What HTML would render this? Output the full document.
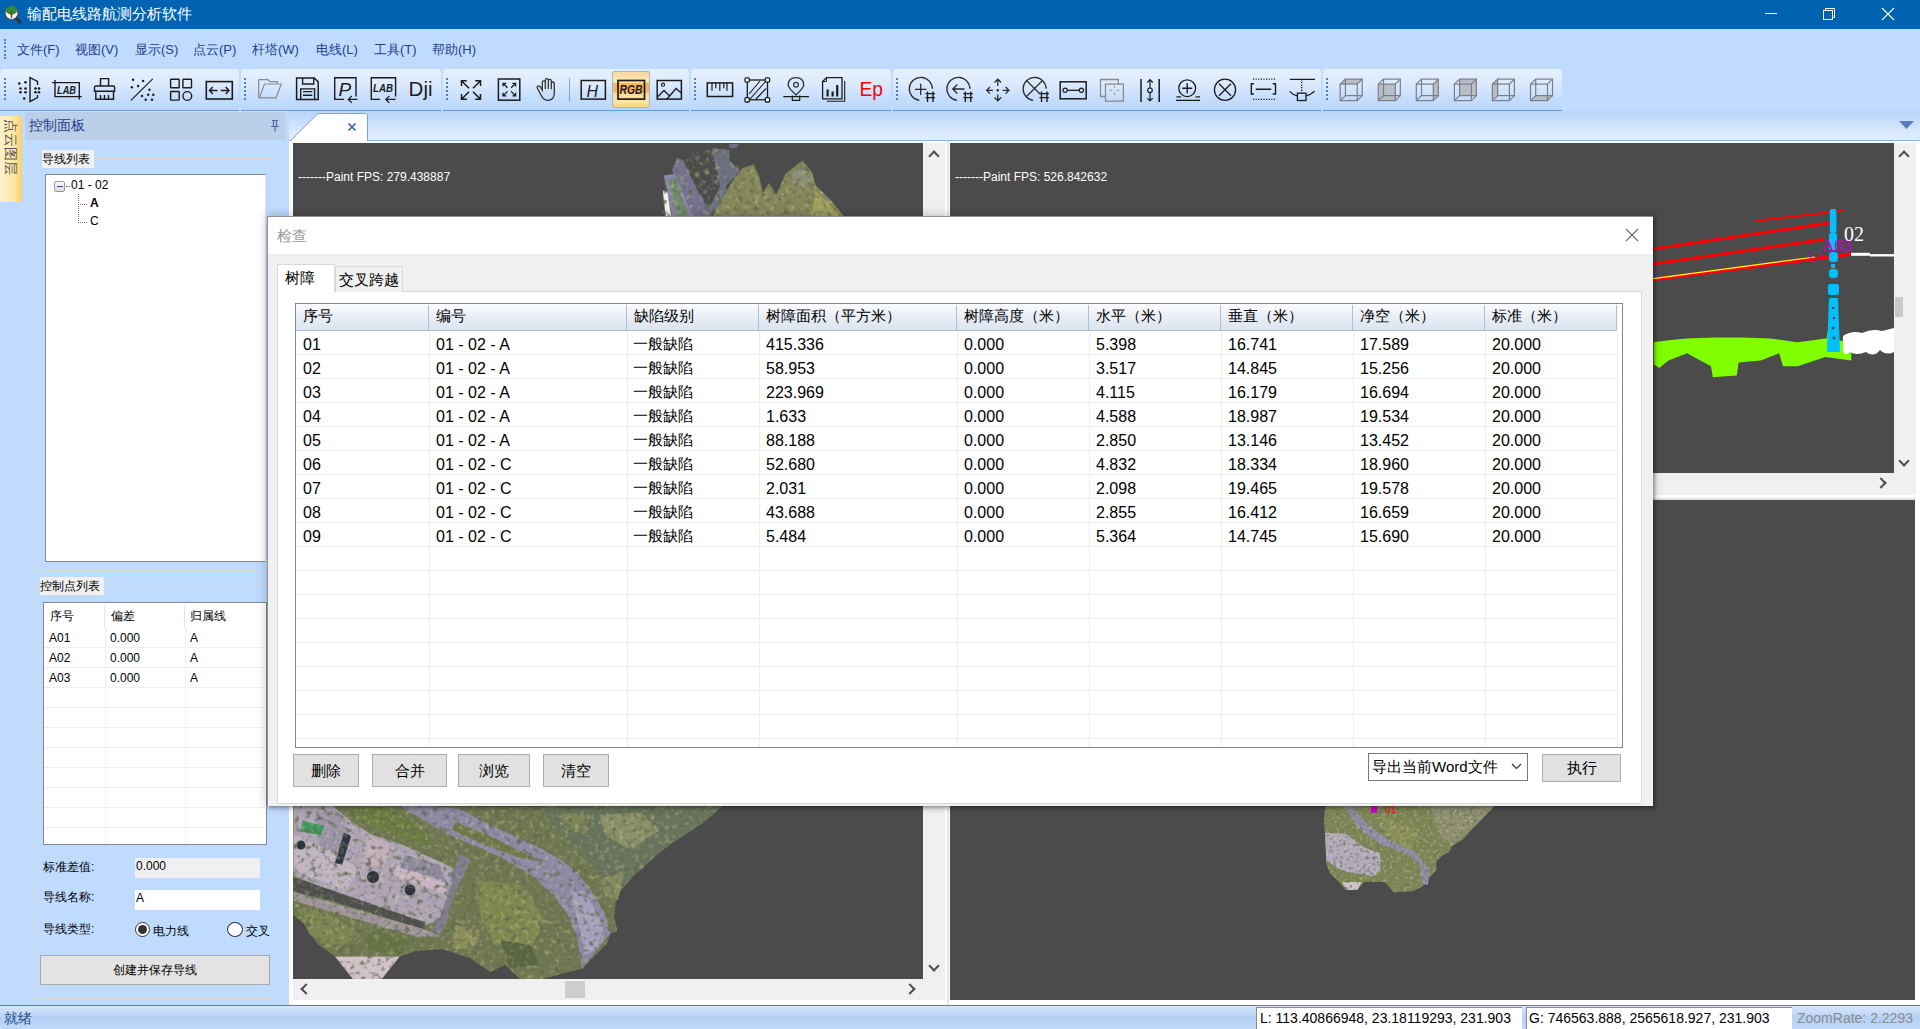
<!DOCTYPE html>
<html><head><meta charset="utf-8">
<style>
*{box-sizing:border-box;margin:0;padding:0}
html,body{width:1920px;height:1029px;overflow:hidden;background:#bfdbff;font-family:"Liberation Sans",sans-serif;color:#000}
.a{position:absolute}
.nw{white-space:nowrap}
.grip{position:absolute;width:2px;border-left:2px dotted #4a7fd6}
.tbseg{position:absolute;top:69px;height:42px;border-radius:4px 4px 0 0;background:linear-gradient(#e6f0fe 0%,#dceafd 35%,#c6defd 70%,#b9d7fd 100%);border-bottom:1px solid #6a9ad6}
.ico{position:absolute;top:77px;width:26px;height:26px}
.menu{position:absolute;top:12px;font-size:13px;line-height:15px;color:#243f8e;white-space:nowrap}
.dark{position:absolute;background:#4b4b4b}
.sb{position:absolute;background:#f0f0f0}
.chev{position:absolute;width:8px;height:8px;border-left:2px solid #505050;border-top:2px solid #505050}
.btn{position:absolute;background:#e1e1e1;border:1px solid #adadad;font-size:15px;line-height:31px;text-align:center}
.row{position:absolute;left:0;height:24px;width:1326px;border-bottom:1px solid #f0f0f0}
.c{position:absolute;top:0;height:24px;font-size:16px;line-height:24px;white-space:nowrap}
.z{font-size:15px}
.vl{position:absolute;width:1px;background:#f0f0f0}
</style></head><body>
<!-- title bar -->
<div class="a" style="left:0;top:0;width:1920px;height:29px;background:#0063b1"></div>
<div class="a nw" style="left:27px;top:5px;font-size:15px;line-height:18px;color:#fff">输配电线路航测分析软件</div>
<svg class="a" style="left:1758px;top:4px" width="160" height="22" viewBox="0 0 160 22">
 <line x1="7" y1="9.5" x2="19" y2="9.5" stroke="#fff" stroke-width="1"/>
 <rect x="65.5" y="6.5" width="9" height="9" fill="none" stroke="#fff"/>
 <path d="M67.5 6.5V4.5H76.5V13.5H74.5" fill="none" stroke="#fff"/>
 <path d="M124 4L136 16M136 4L124 16" stroke="#fff" stroke-width="1.1"/>
</svg>
<!-- app icon -->
<svg class="a" style="left:3px;top:3px" width="20" height="22" viewBox="0 0 20 22">
 <circle cx="8.5" cy="10" r="6.5" fill="#fff" stroke="#555" stroke-width="1.2"/>
 <path d="M3 9 Q3 3 8.5 3 Q14 3 14 9 Q11 12 8.5 12 Q6 12 3 9Z" fill="#2e8b3a"/>
 <path d="M8.5 8V15" stroke="#8b3a1a" stroke-width="1.5"/>
 <path d="M13 15L18 20" stroke="#333" stroke-width="3"/>
</svg>
<!-- menubar -->
<div class="grip" style="left:4px;top:39px;height:20px"></div>
<div class="menu" style="left:17px;top:42px">文件(F)</div>
<div class="menu" style="left:75px;top:42px">视图(V)</div>
<div class="menu" style="left:135px;top:42px">显示(S)</div>
<div class="menu" style="left:193px;top:42px">点云(P)</div>
<div class="menu" style="left:252px;top:42px">杆塔(W)</div>
<div class="menu" style="left:316px;top:42px">电线(L)</div>
<div class="menu" style="left:374px;top:42px">工具(T)</div>
<div class="menu" style="left:432px;top:42px">帮助(H)</div>
<!-- toolbar segments -->
<div class="a" style="left:0;top:111px;width:1920px;height:1px;background:#d8e2ee"></div>
<div class="tbseg" style="left:0;width:239px"></div>
<div class="tbseg" style="left:241px;width:200px"></div>
<div class="tbseg" style="left:443px;width:246px"></div>
<div class="tbseg" style="left:691px;width:200px"></div>
<div class="tbseg" style="left:893px;width:428px"></div>
<div class="tbseg" style="left:1323px;width:239px"></div>
<div class="grip" style="left:4px;top:78px;height:22px"></div>
<div class="grip" style="left:244px;top:78px;height:22px"></div>
<div class="grip" style="left:446px;top:78px;height:22px"></div>
<div class="grip" style="left:694px;top:78px;height:22px"></div>
<div class="grip" style="left:896px;top:78px;height:22px"></div>
<div class="grip" style="left:1326px;top:78px;height:22px"></div>
<div class="a" style="left:569px;top:78px;width:1px;height:24px;background:#7fa6dc"></div>
<div class="a" style="left:612px;top:71px;width:38px;height:37px;border:1px solid #9ab8e0;border-radius:2px;background:linear-gradient(#f9d8a8 0%,#fbdba8 13%,#fde8a8 16%,#fde4a0 30%,#f9b45a 33%,#f9b45a 57%,#fddb92 60%,#fee6a2 87%,#fdd984 91%,#fdd984 100%)"></div>
<svg class="a" style="left:0;top:0" width="1600" height="110" viewBox="0 0 1600 110">
<g fill="none" stroke="#1c1c1c" stroke-width="1.4" stroke-linecap="butt" stroke-linejoin="miter">
<!-- 1: point projection -->
<g fill="#1c1c1c" stroke="none">
<circle cx="19.3" cy="83.5" r="1.3"/><circle cx="25.5" cy="82.3" r="1.3"/>
<circle cx="20.5" cy="88.5" r="1.3"/><circle cx="25.5" cy="88.5" r="1.3"/>
<circle cx="20.5" cy="92.2" r="1.3"/><circle cx="25.5" cy="92.2" r="1.3"/>
<circle cx="24.2" cy="98.5" r="1.3"/>
<circle cx="35.5" cy="88.5" r="1.3"/><circle cx="39" cy="88.5" r="1.3"/>
<circle cx="35.5" cy="92.2" r="1.3"/><circle cx="39" cy="92.2" r="1.3"/>
</g>
<path d="M37.5 85V81.5L30 77.7V101.5L37.5 97.5V95"/>
<!-- 2: LAB -->
<path d="M52 82.6H79.3V99.5M55 80V96.6H81.7"/>
<text x="57" y="93.5" font-family="Liberation Sans" font-style="italic" font-weight="bold" font-size="11" fill="#1c1c1c" stroke="none" textLength="19" lengthAdjust="spacingAndGlyphs">LAB</text>
<!-- 3: brush -->
<path d="M100.5 86V78.6H108.6V86M94.5 91.2V87.5Q94.5 86 96 86H113Q114.6 86 114.6 87.5V91.2ZM95.8 91.2V99.3H113.5V91.2M100.5 95V99M104.5 95V99M108.5 95V99"/>
<!-- 4: slash dots -->
<path d="M130.9 100.4L152.7 78.9" stroke-width="1.2"/>
<g fill="#1c1c1c" stroke="none">
<circle cx="133.1" cy="79.7" r="1.2"/><circle cx="143.1" cy="81" r="1.2"/><circle cx="131.9" cy="87.3" r="1.2"/><circle cx="138.1" cy="86" r="1.2"/>
<circle cx="149.5" cy="89.7" r="1.2"/><circle cx="142" cy="96" r="1.2"/><circle cx="148.2" cy="94.7" r="1.2"/><circle cx="153.3" cy="94.7" r="1.2"/>
<circle cx="145.7" cy="99.7" r="1.2"/><circle cx="152" cy="99.7" r="1.2"/>
</g>
<!-- 5: grid -->
<rect x="170.6" y="79.2" width="8.6" height="8.6" rx="0.6"/><rect x="182.9" y="79.2" width="8.6" height="8.6" rx="0.6"/>
<rect x="170.6" y="91.5" width="8.6" height="8.6" rx="0.6"/><circle cx="187.3" cy="96" r="4.4"/>
<!-- 6: rect arrows -->
<rect x="206.3" y="81.6" width="26" height="17.4" stroke-width="1.6"/>
<path d="M209.5 90.5H217.5M212.8 87L209.5 90.5L212.8 94M220.8 90.5H229M225.7 87L229 90.5L225.7 94"/>
<!-- seg2: folder -->
<g stroke="#8a8a8a" stroke-width="1.2" stroke-linejoin="round">
<path d="M258.7 97.8V79.7H267.9L270 81.7H277.3V84"/>
<path d="M258.7 97.8H276L281.3 84H264.5L259.5 97.8"/>
</g>
<!-- save -->
<path d="M296.6 77.9H314.2L318.2 81.9V99.4H296.6Z" stroke-width="1.5"/>
<path d="M302.6 77.9V84H313.7V77.9M300.7 99.4V88.9H314.6V99.4M303 91.6H312.3M303 95.3H312.3"/>
<!-- P box -->
<path d="M344 99.4H334.7V77.8H356V96.6"/>
<path d="M357.5 99.4H348.5M351.8 96L348.3 99.4L351.8 102.8" stroke-width="1.2"/>
<text x="338.5" y="95.8" font-family="Liberation Sans" font-style="italic" font-size="19" fill="#1c1c1c" stroke="none">P</text>
<!-- LAB box -->
<path d="M380 99.4H371.3V77.8H395.6V96.6"/>
<path d="M395.6 99.4H386M389.3 96L385.8 99.4L389.3 102.8" stroke-width="1.2"/>
<text x="373" y="92.3" font-family="Liberation Sans" font-style="italic" font-weight="bold" font-size="10.5" fill="#1c1c1c" stroke="none" textLength="20" lengthAdjust="spacingAndGlyphs">LAB</text>
<!-- Dji -->
<text x="408.6" y="95.8" font-family="Liberation Sans" font-size="20" fill="#1c1c1c" stroke="none" textLength="24" lengthAdjust="spacingAndGlyphs">Dji</text>
<!-- seg3: expand -->
<path d="M461.5 86V80.7H466.8M461.5 80.7L469 88.2M480.5 86V80.7H475.2M480.5 80.7L473 88.2M461.5 94V99.3H466.8M461.5 99.3L469 91.8M480.5 94V99.3H475.2M480.5 99.3L473 91.8" stroke-width="1.5"/>
<!-- expand box -->
<rect x="498.4" y="79" width="21.4" height="21.2" stroke-width="1.5"/>
<path d="M503 86.5V83.3H506.2M503 83.3L507.5 87.8M515.6 86.5V83.3H512.4M515.6 83.3L511.1 87.8M503 92.7V95.9H506.2M503 95.9L507.5 91.4M515.6 92.7V95.9H512.4M515.6 95.9L511.1 91.4" stroke-width="1.3"/>
<!-- hand -->
<path d="M541 95L537.5 88.5Q536.5 86.5 538.3 86Q539.6 85.6 540.6 87.4L542.3 90.2V82.5Q542.3 80.8 543.8 80.8Q545.3 80.8 545.3 82.5V89V80.3Q545.3 78.7 546.8 78.7Q548.3 78.7 548.3 80.3V89V81Q548.3 79.4 549.8 79.4Q551.3 79.4 551.3 81V89.3V83.5Q551.3 82 552.8 82Q554.3 82 554.3 83.5V93Q554.3 100.3 547.5 100.3Q543.5 100.3 541 95Z" stroke-width="1.3" stroke="#333"/>
<!-- H -->
<rect x="581.2" y="80.5" width="24.2" height="18.6" stroke-width="1.5"/>
<text x="586.5" y="96.5" font-family="Liberation Sans" font-style="italic" font-size="16" fill="#1c1c1c" stroke="none">H</text>
<!-- RGB -->
<rect x="618" y="80.5" width="26.5" height="18.6" stroke-width="1.7"/>
<text x="619.5" y="94.3" font-family="Liberation Sans" font-style="italic" font-weight="bold" font-size="12" fill="#1c1c1c" stroke="none" textLength="23" lengthAdjust="spacingAndGlyphs">RGB</text>
<!-- image -->
<rect x="657.2" y="80.5" width="24.2" height="18.6" stroke-width="1.5"/>
<circle cx="663" cy="84.7" r="1.6" stroke-width="1.1"/>
<path d="M657.5 97L664 90.5L670 96.3M667 99L676 88.5L681.3 93" stroke-width="1.3"/>
<!-- seg4: ruler -->
<rect x="707.3" y="82.9" width="25.3" height="13.6" stroke-width="1.5"/>
<path d="M712 83V90.8M715.8 83V88.3M719.8 83V90.8M723.8 83V88.3M727 83V90.8" stroke-width="1.2"/>
<!-- hatched rect -->
<rect x="747.3" y="80" width="20.2" height="19.8" stroke-width="1.3"/>
<path d="M749 94L760 81M750 99L766 81M756 99L766 88.5" stroke-width="1.1"/>
<g fill="#fff" stroke-width="1.3"><rect x="745" y="77.8" width="4.3" height="4.3" rx="1"/><rect x="765.3" y="77.8" width="4.3" height="4.3" rx="1"/><rect x="745" y="97.7" width="4.3" height="4.3" rx="1"/><rect x="765.3" y="97.7" width="4.3" height="4.3" rx="1"/></g>
<!-- pin -->
<path d="M796 95Q788.2 87.5 788.2 85.2Q788.2 77.6 796 77.6Q803.7 77.6 803.7 85.2Q803.7 87.5 796 95Z" stroke="#333" stroke-width="1.3"/>
<circle cx="796" cy="84.8" r="2.4" stroke="#333" stroke-width="1.2"/>
<path d="M783.3 96.6H809M792.3 95.5V100.4H799.7V95.5" stroke-width="1.2"/>
<!-- chart doc -->
<path d="M822.6 81.5L826.5 77.6H842V98.8H822.6Z" stroke-width="1.3"/>
<path d="M822.6 81.5H826.5V77.6" stroke-width="1"/>
<path d="M844.7 81V101.3H826.8" stroke-width="1.1"/>
<path d="M827.6 96.5V89.6M832.6 96.5V91.5M837.2 96.5V85" stroke-width="2.2"/>
<text x="859.5" y="96.3" font-family="Liberation Sans" font-size="21" fill="#ff0000" stroke="none" textLength="23.5" lengthAdjust="spacingAndGlyphs">Ep</text>
<!-- seg5 -->
<g stroke="#2a2a2a" stroke-width="1.3">
<path d="M919.3 100.3A11.5 11.5 0 1 1 932.3 88.8"/>
<path d="M915 89.3H926.5M920.7 83.7V95"/>
<path d="M956.9 100.3A11.5 11.5 0 1 1 969.9 88.8"/>
<path d="M953 89H964.5M957.3 84.5L952.8 89L957.3 93.5"/>
<path d="M997.8 80V86M994.5 82.5L997.8 79.2L1001.1 82.5M997.8 94.5V100.8M994.5 97.5L997.8 100.8L1001.1 97.5M987.2 90.3H993M990 87L986.7 90.3L990 93.6M1002.7 90.3H1008.7M1005.6 87L1008.9 90.3L1005.6 93.6"/>
<circle cx="997.8" cy="90.3" r="1.2" fill="#2a2a2a" stroke="none"/>
<path d="M1033.1 100.3A11.5 11.5 0 1 1 1046.1 88.8"/>
<path d="M1026.5 80.5L1040 94M1042.5 80.5L1026.5 96.5" stroke-width="1.2"/>
</g>
<g stroke="#1c1c1c" stroke-width="1.4">
<path d="M925.5 93.6H935M925.5 97.6H935M927.5 91.5V102M933 91.5V102"/>
<path d="M963.3 93.6H972.8M963.3 97.6H972.8M965.3 91.5V102M970.8 91.5V102"/>
<path d="M1039.5 93.6H1049M1039.5 97.6H1049M1041.5 91.5V102M1047 91.5V102"/>
</g>
<rect x="1060.2" y="81.8" width="26" height="17" stroke-width="1.5"/>
<path d="M1067.3 90.3H1079.2" stroke-width="1.3"/>
<circle cx="1065.1" cy="90.3" r="2.1" stroke-width="1.2"/><circle cx="1081.4" cy="90.3" r="2.1" stroke-width="1.2"/>
<!-- layered squares -->
<g stroke="#8c8c8c" stroke-width="1.3"><path d="M1105.5 96.5H1100.5V79.5H1118.3V84"/><rect x="1105.5" y="84.1" width="17.9" height="17.1"/>
<path d="M1114.5 85.8V87.8M1114.5 92.8V94.8M1109.8 90.3H1111.8M1117.2 90.3H1119.2" stroke-width="1"/></g>
<path d="M1141 79V102M1159.2 79V102" stroke-width="1.5"/>
<circle cx="1150" cy="90.3" r="2.3" stroke-width="1.2"/>
<path d="M1150 88V80M1147.3 82.5L1150 79.7L1152.7 82.5M1150 92.6V101M1147.3 98.2L1150 101L1152.7 98.2" stroke-width="1.2"/>
<circle cx="1187.2" cy="88.2" r="8.4" stroke-width="1.3"/>
<path d="M1182.2 88.2H1192.2M1187.2 83.2V93.2" stroke-width="1.4"/>
<path d="M1176 100.4H1200M1176.5 96.9H1181M1195.5 96.9H1200" stroke-width="1.3"/>
<circle cx="1225" cy="89.7" r="10.6" stroke-width="1.3"/>
<path d="M1219 83.7L1231 95.7M1231 83.7L1219 95.7" stroke-width="1.3"/>
<path d="M1253 79.2H1275M1253 99.3H1275" stroke-dasharray="1.2 1.4" stroke-width="1.2"/>
<path d="M1254 83.7H1251.3V94H1254M1272.7 83.7H1275.5V94H1272.7M1255.8 89.3H1271.2" stroke-width="1.4"/>
<path d="M1289.8 79.3H1315M1301.6 80V93" stroke-width="1.3"/>
<path d="M1301.6 80.5V93" stroke="#fff" stroke-width="1.4" stroke-dasharray="1.3 1.3"/>
<rect x="1297.4" y="93.2" width="8.6" height="7.3" stroke-width="1.3"/>
<path d="M1289.5 91.3Q1293 95 1297.4 95.8M1306 95.8Q1310.5 95 1314.5 91.3" stroke-width="1.2"/>
</g>
<!-- cubes -->
<g stroke="#7a7e86" stroke-width="1.2" fill="none">
<path d="M1340.2 84.1L1345.4 79.1H1362.2L1357.2 84.1Z" fill="#b9bec7" stroke="none"/><rect x="1340.2" y="84.1" width="17" height="16.5"/><rect x="1345.4" y="79.1" width="16.8" height="16.5"/><path d="M1340.2 84.1L1345.4 79.1M1357.2 84.1L1362.2 79.1M1340.2 100.6L1345.4 95.6M1357.2 100.6L1362.2 95.6"/>
<rect x="1378.3" y="84.1" width="17" height="16.5" fill="#b9bec7" stroke="none"/><rect x="1378.3" y="84.1" width="17" height="16.5"/><rect x="1383.5" y="79.1" width="16.8" height="16.5"/><path d="M1378.3 84.1L1383.5 79.1M1395.3 84.1L1400.3 79.1M1378.3 100.6L1383.5 95.6M1395.3 100.6L1400.3 95.6"/>
<path d="M1433.3 84.1L1438.3 79.1V95.6L1433.3 100.6Z" fill="#b9bec7" stroke="none"/><rect x="1416.3" y="84.1" width="17" height="16.5"/><rect x="1421.5" y="79.1" width="16.8" height="16.5"/><path d="M1416.3 84.1L1421.5 79.1M1433.3 84.1L1438.3 79.1M1416.3 100.6L1421.5 95.6M1433.3 100.6L1438.3 95.6"/>
<rect x="1459.6000000000001" y="79.1" width="16.8" height="16.5" fill="#b9bec7" stroke="none"/><rect x="1454.4" y="84.1" width="17" height="16.5"/><rect x="1459.6000000000001" y="79.1" width="16.8" height="16.5"/><path d="M1454.4 84.1L1459.6000000000001 79.1M1471.4 84.1L1476.4 79.1M1454.4 100.6L1459.6000000000001 95.6M1471.4 100.6L1476.4 95.6"/>
<path d="M1492.4 84.1L1497.6000000000001 79.1V95.6L1492.4 100.6Z" fill="#b9bec7" stroke="none"/><rect x="1492.4" y="84.1" width="17" height="16.5"/><rect x="1497.6000000000001" y="79.1" width="16.8" height="16.5"/><path d="M1492.4 84.1L1497.6000000000001 79.1M1509.4 84.1L1514.4 79.1M1492.4 100.6L1497.6000000000001 95.6M1509.4 100.6L1514.4 95.6"/>
<path d="M1530.5 100.6L1535.7 95.6H1552.5L1547.5 100.6Z" fill="#b9bec7" stroke="none"/><rect x="1530.5" y="84.1" width="17" height="16.5"/><rect x="1535.7" y="79.1" width="16.8" height="16.5"/><path d="M1530.5 84.1L1535.7 79.1M1547.5 84.1L1552.5 79.1M1530.5 100.6L1535.7 95.6M1547.5 100.6L1552.5 95.6"/>
</g>
</svg>
<!-- left panel -->
<div class="a" style="left:0;top:116px;width:22px;height:86px;background:linear-gradient(90deg,#fff2cc,#ffe9a8 60%,#fbd066)"></div>
<div class="a nw" style="left:-17px;top:139px;width:56px;height:16px;font-size:14px;line-height:16px;color:#555;transform:rotate(90deg);transform-origin:28px 8px">点云图层</div>
<div class="a" style="left:25px;top:112px;width:260px;height:28px;background:#bccfe8"></div>
<div class="a nw" style="left:29px;top:117px;font-size:14px;line-height:16px;color:#1f3f8a">控制面板</div>
<svg class="a" style="left:269px;top:119px" width="12" height="14" viewBox="0 0 12 14"><path d="M3 1.5H9M4.5 1.5V7.5M7.5 1.5V7.5M2 7.5H10M6 7.5V12.5" stroke="#4a68b0" stroke-width="1.2" fill="none"/></svg>
<!-- group 1 -->
<div class="a" style="left:35px;top:158px;width:241px;height:413px;border:1px solid #d8d8d8"></div>
<div class="a nw" style="left:42px;top:150px;width:52px;height:18px;background:#f0f0f0;font-size:12px;line-height:18px">导线列表</div>
<div class="a" style="left:45px;top:174px;width:221px;height:388px;background:#fff;border:1px solid #828790;border-right-color:#e0e0e0;border-bottom-color:#8a8a8a"></div>
<div class="a" style="left:54px;top:181px;width:11px;height:11px;border:1px solid #9a9a9a;border-radius:2px;background:linear-gradient(#f8f8f8,#dcdcdc)"></div>
<div class="a" style="left:57px;top:186px;width:6px;height:1px;background:#4040a0"></div>
<div class="a" style="left:66px;top:186px;width:4px;border-top:1px dotted #777"></div>
<div class="a nw" style="left:71px;top:178px;font-size:12px;line-height:14px">01 - 02</div>
<div class="a" style="left:78px;top:194px;height:29px;border-left:1px dotted #777"></div>
<div class="a" style="left:78px;top:204px;width:9px;border-top:1px dotted #777"></div>
<div class="a" style="left:78px;top:222px;width:9px;border-top:1px dotted #777"></div>
<div class="a nw" style="left:90px;top:196px;font-size:12px;line-height:14px;font-weight:bold">A</div>
<div class="a nw" style="left:90px;top:214px;font-size:12px;line-height:14px">C</div>
<!-- group 2 -->
<div class="a" style="left:33px;top:585px;width:244px;height:414px;border:1px solid #d8d8d8"></div>
<div class="a nw" style="left:40px;top:577px;width:64px;height:18px;background:#f0f0f0;font-size:12px;line-height:18px">控制点列表</div>
<div class="a" style="left:43px;top:602px;width:224px;height:243px;background:#fff;border:1px solid #828790"></div>
<div class="a" style="left:104px;top:606px;width:1px;height:21px;background:#e5e5e5"></div>
<div class="a" style="left:184px;top:606px;width:1px;height:21px;background:#e5e5e5"></div>
<div class="a" style="left:105px;top:627px;width:1px;height:217px;background:#efefef"></div>
<div class="a" style="left:185px;top:627px;width:1px;height:217px;background:#efefef"></div>
<div class="a" style="left:44px;top:647px;width:221px;height:1px;background:#efefef"></div>
<div class="a" style="left:44px;top:667px;width:221px;height:1px;background:#efefef"></div>
<div class="a" style="left:44px;top:687px;width:221px;height:1px;background:#efefef"></div>
<div class="a" style="left:44px;top:707px;width:221px;height:1px;background:#efefef"></div>
<div class="a" style="left:44px;top:727px;width:221px;height:1px;background:#efefef"></div>
<div class="a" style="left:44px;top:747px;width:221px;height:1px;background:#efefef"></div>
<div class="a" style="left:44px;top:767px;width:221px;height:1px;background:#efefef"></div>
<div class="a" style="left:44px;top:787px;width:221px;height:1px;background:#efefef"></div>
<div class="a" style="left:44px;top:807px;width:221px;height:1px;background:#efefef"></div>
<div class="a" style="left:44px;top:827px;width:221px;height:1px;background:#efefef"></div>
<div class="a nw" style="left:50px;top:609px;font-size:12px;line-height:14px">序号</div>
<div class="a nw" style="left:111px;top:609px;font-size:12px;line-height:14px">偏差</div>
<div class="a nw" style="left:190px;top:609px;font-size:12px;line-height:14px">归属线</div>
<div class="a nw" style="left:49px;top:631px;font-size:12px;line-height:14px">A01</div>
<div class="a nw" style="left:110px;top:631px;font-size:12px;line-height:14px">0.000</div>
<div class="a nw" style="left:190px;top:631px;font-size:12px;line-height:14px">A</div>
<div class="a nw" style="left:49px;top:651px;font-size:12px;line-height:14px">A02</div>
<div class="a nw" style="left:110px;top:651px;font-size:12px;line-height:14px">0.000</div>
<div class="a nw" style="left:190px;top:651px;font-size:12px;line-height:14px">A</div>
<div class="a nw" style="left:49px;top:671px;font-size:12px;line-height:14px">A03</div>
<div class="a nw" style="left:110px;top:671px;font-size:12px;line-height:14px">0.000</div>
<div class="a nw" style="left:190px;top:671px;font-size:12px;line-height:14px">A</div>
<div class="a nw" style="left:43px;top:860px;font-size:12px;line-height:14px">标准差值:</div>
<div class="a nw" style="left:135px;top:858px;width:125px;height:20px;background:#f0f0f0;font-size:12px;line-height:16px;padding-left:1px">0.000</div>
<div class="a nw" style="left:43px;top:890px;font-size:12px;line-height:14px">导线名称:</div>
<div class="a nw" style="left:135px;top:890px;width:125px;height:20px;background:#fff;font-size:12px;line-height:16px;padding-left:1px">A</div>
<div class="a nw" style="left:43px;top:922px;font-size:12px;line-height:14px">导线类型:</div>
<div class="a" style="left:135px;top:922px;width:15px;height:15px;border-radius:50%;border:1px solid #333;background:#fff"></div>
<div class="a" style="left:138px;top:925px;width:9px;height:9px;border-radius:50%;background:#333"></div>
<div class="a nw" style="left:153px;top:924px;font-size:12px;line-height:14px">电力线</div>
<div class="a" style="left:227px;top:922px;width:16px;height:15px;border-radius:50%;border:1px solid #333;background:#fff"></div>
<div class="a nw" style="left:246px;top:924px;font-size:12px;line-height:14px">交叉</div>
<div class="a nw" style="left:40px;top:955px;width:230px;height:30px;background:#e3e3e3;border:1px solid #a8a8a8;font-size:12px;line-height:28px;text-align:center">创建并保存导线</div>
<!-- document area -->
<div class="a" style="left:289px;top:111px;width:1631px;height:30px;background:linear-gradient(#b9d5fb,#d9e9fd 70%,#e2eefd)"></div>
<div class="a" style="left:289px;top:140px;width:1631px;height:1px;background:#8fb3e0"></div>
<div class="a" style="left:289px;top:141px;width:1631px;height:864px;background:#fff"></div>
<svg class="a" style="left:289px;top:112px" width="80" height="30" viewBox="0 0 80 30"><path d="M1 30L29 1.5H77L78.5 3V30Z" fill="#fff"/><path d="M1 29L29 1.5H77L78.5 3V29" fill="none" stroke="#7ca3d6" stroke-width="1"/><path d="M59.5 11.5L66.5 18.5M66.5 11.5L59.5 18.5" stroke="#3b67a8" stroke-width="1.7"/></svg>
<svg class="a" style="left:1899px;top:121px" width="15" height="9" viewBox="0 0 15 9"><path d="M0 0H15L7.5 8Z" fill="#5a7fba"/></svg>
<div class="dark" style="left:293px;top:143px;width:630px;height:836px"></div>
<div class="sb" style="left:923px;top:143px;width:22px;height:836px"></div>
<div class="a" style="left:947px;top:141px;width:2px;height:864px;background:#e8e8e8"></div>
<div class="sb" style="left:293px;top:979px;width:652px;height:21px"></div>
<div class="dark" style="left:950px;top:143px;width:944px;height:330px"></div>
<div class="sb" style="left:1894px;top:143px;width:22px;height:330px"></div>
<div class="sb" style="left:950px;top:473px;width:966px;height:22px"></div>
<div class="a" style="left:950px;top:498px;width:966px;height:2px;background:#e0e0e0"></div>
<div class="dark" style="left:950px;top:500px;width:965px;height:500px"></div>
<div class="a" style="left:1895px;top:297px;width:8px;height:20px;background:#c8c8c8"></div>
<div class="a" style="left:565px;top:981px;width:20px;height:17px;background:#cdcdcd"></div>
<!-- chevrons -->
<div class="chev" style="left:930px;top:152px;transform:rotate(45deg)"></div>
<div class="chev" style="left:930px;top:962px;transform:rotate(225deg)"></div>
<div class="chev" style="left:302px;top:985px;transform:rotate(-45deg)"></div>
<div class="chev" style="left:906px;top:985px;transform:rotate(135deg)"></div>
<div class="chev" style="left:1900px;top:152px;transform:rotate(45deg)"></div>
<div class="chev" style="left:1900px;top:457px;transform:rotate(225deg)"></div>
<div class="chev" style="left:1877px;top:479px;transform:rotate(135deg)"></div>
<div class="a nw" style="left:298px;top:170px;font-size:12px;line-height:14px;color:#fff">-------Paint FPS: 279.438887</div>
<div class="a nw" style="left:955px;top:170px;font-size:12px;line-height:14px;color:#fff">-------Paint FPS: 526.842632</div>
<!-- left viewport scenes -->
<svg class="a" style="left:293px;top:143px" width="630" height="836" viewBox="293 143 630 836">
<defs><clipPath id="cl1"><rect x="293" y="143" width="630" height="836"/></clipPath>
<filter id="spk" x="0" y="0" width="100%" height="100%" filterUnits="objectBoundingBox">
<feTurbulence type="fractalNoise" baseFrequency="0.18" numOctaves="2" seed="7" result="t"/>
<feColorMatrix in="t" type="matrix" values="0 0 0 0 0.12  0 0 0 0 0.14  0 0 0 0 0.08  3.0 0 0 0 -1.55"/>
</filter>
<filter id="spk2" x="0" y="0" width="100%" height="100%" filterUnits="objectBoundingBox">
<feTurbulence type="fractalNoise" baseFrequency="0.2" numOctaves="2" seed="11" result="t"/>
<feColorMatrix in="t" type="matrix" values="0 0 0 0 0.8  0 0 0 0 0.8  0 0 0 0 0.45  0 3.0 0 0 -1.6"/>
</filter>
<clipPath id="aer1"><polygon points="293,806 721.9,806.3 712.9,814.4 702,823.4 685.9,832.4 669.7,845 655.3,848.6 653.5,857.6 642.7,868.3 633.7,875.5 621.2,889.9 615.8,902.5 614,916.9 617.6,931.3 610.4,933 606.8,943.9 594.2,956.5 581.6,969 557,975 543,979 520,979 505,965 490,972 470,958 442.8,949.2 415.8,951 399.7,956.4 381.7,979 352.9,979 335,956.4 317,943.8 306.2,925.8 293.6,915"/></clipPath>
<clipPath id="aer0"><polygon points="662.8,190 675,173.8 677,158 712.5,148 729.4,150 729.4,161 742.5,168.1 753.8,164.4 759.4,177.5 763.1,192.5 768.8,183.1 776.3,194.4 785.6,173.8 802.5,160.6 811.9,171.9 815.6,185 830.6,200 843.8,216 662,216"/></clipPath>
</defs>
<g clip-path="url(#cl1)">
<!-- top: aerial edge -->
<polygon points="712.5,148 729.4,150 729.4,161 740,171 726,186 727,200 716,209 705,216 695,216 712,203 720,186 717,170 714,160" fill="#6c7080"/>
<polygon points="729,144 739,144 736,148 730,148" fill="#6c7080"/>
<polygon points="677,158 683,160 690,175 700,195 712,216 692,216 680,190 672,170" fill="#74728f"/>
<polygon points="663.8,175.6 675,173.8 692,216 672,216" fill="#8a86a8"/>
<polygon points="668,180 676,178 688,216 678,216" fill="#6f8a68"/>
<polygon points="662.8,190.6 667.5,192.5 671.2,216 665.6,216" fill="#f2f2f2"/>
<polygon points="712.5,216 731.3,183.1 742.5,168.1 753.8,164.4 759.4,177.5 763.1,192.5 768.8,183.1 776.3,194.4 785.6,173.8 802.5,160.6 811.9,171.9 815.6,185 830.6,200 843.8,216" fill="#85875a"/>
<polygon points="790,175 803,165 812,178 800,190" fill="#8d8f78"/>
<polygon points="815,190 830,205 838,216 812,216" fill="#a0a05c"/>
<!-- bottom aerial -->
<polygon points="293,806 721.9,806.3 712.9,814.4 702,823.4 685.9,832.4 669.7,845 655.3,848.6 653.5,857.6 642.7,868.3 633.7,875.5 621.2,889.9 615.8,902.5 614,916.9 617.6,931.3 610.4,933 606.8,943.9 594.2,956.5 581.6,969 557,975 543,979 520,979 505,965 490,972 470,958 442.8,949.2 415.8,951 399.7,956.4 335,956.4 317,943.8 306.2,925.8 293.6,915" fill="#6f7850"/>
<polygon points="540,806 721.9,806.3 702,823.4 669.7,845 653.5,857.6 633.7,875.5 621,890 600,872 578,850 560,830" fill="#68745c"/>
<polygon points="600,815 640,812 660,830 630,850 605,835" fill="#8a8f66"/>
<polygon points="560,812 590,815 585,835 565,828" fill="#7d8458"/>
<polygon points="600,880 625,870 618,900 605,895" fill="#858a5e"/>
<polygon points="478,880 520,885 545,920 530,950 495,945 480,915" fill="#7e8a4e"/>
<polygon points="500,940 530,945 540,965 510,968" fill="#5a6440"/>
<polygon points="455,925 480,930 475,950 452,948" fill="#8b8e58"/>
<polygon points="352.9,816.2 376.3,827 415.8,843.1 430.2,844.9 426.6,832.4 390.7,806.3 349.3,806.3" fill="#6e7c42"/>
<polygon points="400,806 430,806 460,809 487,823.4 513.9,836 537.3,846.7 560.7,859.3 576.9,871.9 593,893.5 603.8,911.5 611,933 596.6,951 582.2,969 576.9,936.6 567.9,915 553.5,895.3 531.9,875.5 504.9,859.3 478,846.7 460,839.6 440,830 415,815" fill="#8e8aa6"/>
<polygon points="455,822 490,836 530,856 545,862 520,858 480,843 452,830" fill="#6f7a48"/>
<polygon points="570,890 590,900 603,925 598,948 585,955 580,930" fill="#a39fbd"/>
<polygon points="460,853.9 470.8,859.3 462.6,877 451.8,902 444.6,927 437.4,938 430,936 440,915 448,890 455,868" fill="#807c92"/>
<polygon points="293.6,806.3 333.1,806.3 349.3,819.8 370.9,834.2 403.3,845 453.6,868.3 448.2,893.5 439.2,918.7 424.8,925.8 397.9,915 343.9,897.1 293.6,875.5" fill="#aea4b6"/>
<polygon points="293.6,835 330,850 360,870 345,890 293.6,870" fill="#c0b4c2"/>
<polygon points="367.3,836 390.7,843.1 383.5,868.3 361.9,862.9" fill="#c2aebb"/>
<polygon points="396.1,864.7 448.2,884.5 442.8,893.5 394.3,875.5" fill="#c8b4c2"/>
<polygon points="315,812 345,815 345,850 320,850" fill="#9c94a8"/>
<polygon points="343.9,832.4 351.1,836 342.1,864.7 334.9,862.9" fill="#2c3440"/>
<polygon points="302.6,820.7 324.2,826.1 320.6,835.1 300.8,831.5" fill="#3c9a5a"/>
<circle cx="301" cy="845" r="4.5" fill="#2c3238"/>
<circle cx="373" cy="877" r="6" fill="#2c3238"/>
<circle cx="410" cy="890" r="5.5" fill="#2c3238"/>
<polygon points="405,855 440,865 445,880 400,868" fill="#8e8aa0"/>
<polygon points="293.6,877.3 331.3,889.9 424.8,922.2 424.8,929.4 331.3,900.7 293.6,891.7" fill="#4e4e4e"/>
<polygon points="293.6,891.7 424.8,929.4 441,936.6 415.8,936.6 293.6,900.7" fill="#a0949c"/>
<polygon points="293.6,903 330,915 360,935 335,950 310,935" fill="#7b8650"/>
<polygon points="370,930 410,940 400,955 365,950" fill="#667444"/>
<polygon points="335,956.4 399.7,956.4 381.7,979 352.9,979" fill="#cfc2c8"/>
<g clip-path="url(#aer1)"><rect x="293" y="806" width="430" height="173" filter="url(#spk)"/><rect x="293" y="806" width="430" height="173" filter="url(#spk2)" opacity="0.35"/></g>
<g clip-path="url(#aer0)"><rect x="660" y="143" width="190" height="73" filter="url(#spk)"/><rect x="660" y="143" width="190" height="73" filter="url(#spk2)" opacity="0.35"/></g>
</g>
</svg>
<!-- right upper pane -->
<svg class="a" style="left:1653px;top:143px" width="241" height="330" viewBox="1653 143 241 330">
<path d="M1755 221L1843.5 210.7" stroke="#ff0000" stroke-width="2"/>
<path d="M1653 249L1830 223" stroke="#ff0000" stroke-width="3"/>
<path d="M1653 264L1824 239.5" stroke="#ff0000" stroke-width="3"/>
<path d="M1653 279.5L1851 254" stroke="#ff0000" stroke-width="3.5"/>
<path d="M1653 278.7L1815 257" stroke="#ffff00" stroke-width="1.2"/>
<path d="M1851 254.3H1870" stroke="#ffffff" stroke-width="3"/><path d="M1870 255.3H1894" stroke="#ffffff" stroke-width="2.4"/>
<polygon points="1653.7,342.2 1668.5,340.3 1686.9,338.5 1714.6,337.6 1742.3,337.6 1770,338.5 1797.7,342.2 1825.4,338.5 1851.3,342.2 1851.3,360.6 1825.4,357 1797.7,366.2 1783,366.2 1779.2,353.2 1760.8,360.6 1738.6,362.5 1736.8,375.4 1712.8,377.3 1711,366.2 1687,353.2 1668.5,360.6 1659.2,368 1653.7,364.3" fill="#7fff00"/>
<path d="M1824 355L1832 305L1841 355Z" fill="#7fff00"/>
<rect x="1829.8" y="209" width="6.6" height="24" rx="2" fill="#00bfff"/>
<rect x="1829" y="233" width="8" height="17" rx="2" fill="#00bfff"/>
<rect x="1829" y="252" width="9" height="10" rx="3" fill="#00bfff"/>
<rect x="1831" y="264" width="4" height="4" fill="#00bfff"/>
<rect x="1829" y="269" width="9" height="9" rx="3" fill="#00bfff"/>
<rect x="1828" y="284" width="11" height="11" rx="2" fill="#00bfff"/>
<path d="M1829 298L1838 298L1840 352L1827 352Z" fill="#00bfff"/>
<g fill="#4b4b4b"><circle cx="1833" cy="308" r="1.3"/><circle cx="1834" cy="318" r="1.3"/><circle cx="1833" cy="328" r="1.5"/><circle cx="1834" cy="338" r="1.5"/></g>
<path d="M1843 336Q1852 330 1862 333Q1872 328 1882 331L1894 328V352Q1886 356 1880 350Q1874 358 1866 352Q1856 356 1850 352Q1846 356 1843 352Z" fill="#ffffff"/>
<text x="1822" y="250.5" font-family="Liberation Serif" font-size="17" fill="#cc00cc" textLength="30" lengthAdjust="spacingAndGlyphs">A03</text>
<rect x="1810.5" y="251.5" width="10" height="10" fill="none" stroke="#cc00cc" stroke-width="1"/>
<text x="1844" y="241" font-family="Liberation Serif" font-size="20" fill="#ffffff">02</text>
</svg>
<!-- right lower pane -->
<svg class="a" style="left:1300px;top:806px" width="220" height="100" viewBox="1300 806 220 100">
<polygon points="1325.8,806 1494.7,806 1483.3,816.8 1474.1,827.1 1462.7,839.7 1452.3,845.4 1448.9,852.3 1442,855.7 1436.3,861.4 1436.3,870.6 1429.4,877.5 1422.6,886.6 1412.3,891.2 1393.9,892.4 1384.8,882 1364.1,882 1357.3,890 1345.8,890 1339,882 1329.8,872.9 1326.3,863.7 1325.2,840.8 1324.1,817.9" fill="#7f8656"/>
<polygon points="1430,806 1494.7,806 1474.1,827.1 1452.3,845.4 1440,835" fill="#8e9070"/>
<polygon points="1380,815 1420,830 1410,850 1385,840" fill="#8a9058"/>
<polygon points="1345,806 1352,806 1368,825 1392,842 1415,852 1430,870 1428,885 1422,884 1420,865 1408,854 1380,844 1358,828" fill="#8e8aa8"/>
<polygon points="1325.2,832.7 1345.8,833.8 1364.1,847.6 1380.2,853.3 1380.2,870.6 1373.3,876.2 1341.2,870.6 1326.3,860.3" fill="#b4aabe"/>
<polygon points="1342,882 1362,882 1357,890 1347,890" fill="#d0c4cc"/>
<defs><clipPath id="aer2"><polygon points="1325.8,806 1494.7,806 1483.3,816.8 1474.1,827.1 1462.7,839.7 1452.3,845.4 1448.9,852.3 1442,855.7 1436.3,861.4 1436.3,870.6 1429.4,877.5 1422.6,886.6 1412.3,891.2 1393.9,892.4 1384.8,882 1364.1,882 1357.3,890 1345.8,890 1339,882 1329.8,872.9 1326.3,863.7 1325.2,840.8 1324.1,817.9"/></clipPath>
<filter id="spk3" x="0" y="0" width="100%" height="100%" filterUnits="objectBoundingBox">
<feTurbulence type="fractalNoise" baseFrequency="0.3" numOctaves="2" seed="5" result="t"/>
<feColorMatrix in="t" type="matrix" values="0 0 0 0 0.15  0 0 0 0 0.17  0 0 0 0 0.1  3.0 0 0 0 -1.55"/>
</filter>
<filter id="spk4" x="0" y="0" width="100%" height="100%" filterUnits="objectBoundingBox">
<feTurbulence type="fractalNoise" baseFrequency="0.3" numOctaves="2" seed="9" result="t"/>
<feColorMatrix in="t" type="matrix" values="0 0 0 0 0.8  0 0 0 0 0.8  0 0 0 0 0.45  0 3.0 0 0 -1.6"/>
</filter></defs>
<g clip-path="url(#aer2)"><rect x="1320" y="806" width="180" height="90" filter="url(#spk3)"/><rect x="1320" y="806" width="180" height="90" filter="url(#spk4)" opacity="0.4"/></g>
<rect x="1371" y="806" width="6" height="7" fill="#cc00cc"/>
<text x="1385" y="813" font-family="Liberation Sans" font-size="10" fill="#ff0000">01</text>
</svg>
<!-- dialog -->
<div class="a" style="left:267px;top:216px;width:1386px;height:590px;background:#f0f0f0;border-left:1px solid #8a9098;border-top:1px solid #8a9098;box-shadow:2px 2px 3px rgba(0,0,0,0.3),0 0 10px 1px rgba(0,0,0,0.2)"></div>
<div class="a" style="left:268px;top:217px;width:1385px;height:37px;background:#fff"></div>
<div class="a nw" style="left:277px;top:227px;font-size:15px;line-height:17px;color:#9b9b9b">检查</div>
<svg class="a" style="left:1625px;top:228px" width="14" height="14" viewBox="0 0 14 14"><path d="M1 1L13 13M13 1L1 13" stroke="#6e6e6e" stroke-width="1.1"/></svg>
<div class="a" style="left:277px;top:291px;width:1365px;height:513px;background:#fff;border:1px solid #d9d9d9"></div>
<div class="a" style="left:335px;top:266px;width:68px;height:26px;background:#f0f0f0;border:1px solid #d9d9d9;border-bottom:none"></div>
<div class="a" style="left:277px;top:264px;width:58px;height:29px;background:#fff;border:1px solid #d9d9d9;border-bottom:none"></div>
<div class="a nw" style="left:285px;top:269px;font-size:15px;line-height:17px">树障</div>
<div class="a nw" style="left:339px;top:271px;font-size:15px;line-height:17px">交叉跨越</div>
<div class="a" style="left:295px;top:303px;width:1328px;height:445px;background:#fff;border:1px solid #828790"></div>
<div class="a" style="left:296px;top:304px;width:1321px;height:27px;background:linear-gradient(#fbfcfe,#e9eef6 50%,#dbe4f0);border-bottom:1px solid #a9c0db"></div>
<div class="a nw" style="left:303px;top:308px;font-size:14.5px;line-height:17px">序号</div>
<div class="a nw" style="left:436px;top:308px;font-size:14.5px;line-height:17px">编号</div>
<div class="a nw" style="left:634px;top:308px;font-size:14.5px;line-height:17px">缺陷级别</div>
<div class="a nw" style="left:766px;top:308px;font-size:14.5px;line-height:17px">树障面积（平方米）</div>
<div class="a nw" style="left:964px;top:308px;font-size:14.5px;line-height:17px">树障高度（米）</div>
<div class="a nw" style="left:1096px;top:308px;font-size:14.5px;line-height:17px">水平（米）</div>
<div class="a nw" style="left:1228px;top:308px;font-size:14.5px;line-height:17px">垂直（米）</div>
<div class="a nw" style="left:1360px;top:308px;font-size:14.5px;line-height:17px">净空（米）</div>
<div class="a nw" style="left:1492px;top:308px;font-size:14.5px;line-height:17px">标准（米）</div>
<div class="a" style="left:428px;top:305px;width:1px;height:25px;background:#a9c0db"></div>
<div class="a" style="left:626px;top:305px;width:1px;height:25px;background:#a9c0db"></div>
<div class="a" style="left:758px;top:305px;width:1px;height:25px;background:#a9c0db"></div>
<div class="a" style="left:956px;top:305px;width:1px;height:25px;background:#a9c0db"></div>
<div class="a" style="left:1088px;top:305px;width:1px;height:25px;background:#a9c0db"></div>
<div class="a" style="left:1220px;top:305px;width:1px;height:25px;background:#a9c0db"></div>
<div class="a" style="left:1352px;top:305px;width:1px;height:25px;background:#a9c0db"></div>
<div class="a" style="left:1484px;top:305px;width:1px;height:25px;background:#a9c0db"></div>
<div class="a" style="left:1616px;top:305px;width:1px;height:25px;background:#a9c0db"></div>
<div class="a" style="left:296px;top:354px;width:1321px;height:1px;background:#ededed"></div>
<div class="a" style="left:296px;top:378px;width:1321px;height:1px;background:#ededed"></div>
<div class="a" style="left:296px;top:402px;width:1321px;height:1px;background:#ededed"></div>
<div class="a" style="left:296px;top:426px;width:1321px;height:1px;background:#ededed"></div>
<div class="a" style="left:296px;top:450px;width:1321px;height:1px;background:#ededed"></div>
<div class="a" style="left:296px;top:474px;width:1321px;height:1px;background:#ededed"></div>
<div class="a" style="left:296px;top:498px;width:1321px;height:1px;background:#ededed"></div>
<div class="a" style="left:296px;top:522px;width:1321px;height:1px;background:#ededed"></div>
<div class="a" style="left:296px;top:546px;width:1321px;height:1px;background:#ededed"></div>
<div class="a" style="left:296px;top:570px;width:1321px;height:1px;background:#ededed"></div>
<div class="a" style="left:296px;top:594px;width:1321px;height:1px;background:#ededed"></div>
<div class="a" style="left:296px;top:618px;width:1321px;height:1px;background:#ededed"></div>
<div class="a" style="left:296px;top:642px;width:1321px;height:1px;background:#ededed"></div>
<div class="a" style="left:296px;top:666px;width:1321px;height:1px;background:#ededed"></div>
<div class="a" style="left:296px;top:690px;width:1321px;height:1px;background:#ededed"></div>
<div class="a" style="left:296px;top:714px;width:1321px;height:1px;background:#ededed"></div>
<div class="a" style="left:296px;top:738px;width:1321px;height:1px;background:#ededed"></div>
<div class="a" style="left:429px;top:331px;width:1px;height:416px;background:#ededed"></div>
<div class="a" style="left:627px;top:331px;width:1px;height:416px;background:#ededed"></div>
<div class="a" style="left:759px;top:331px;width:1px;height:416px;background:#ededed"></div>
<div class="a" style="left:957px;top:331px;width:1px;height:416px;background:#ededed"></div>
<div class="a" style="left:1089px;top:331px;width:1px;height:416px;background:#ededed"></div>
<div class="a" style="left:1221px;top:331px;width:1px;height:416px;background:#ededed"></div>
<div class="a" style="left:1353px;top:331px;width:1px;height:416px;background:#ededed"></div>
<div class="a" style="left:1485px;top:331px;width:1px;height:416px;background:#ededed"></div>
<div class="a" style="left:1617px;top:331px;width:1px;height:416px;background:#ededed"></div>
<div class="a nw" style="left:303px;top:334.5px;font-size:16px;line-height:19px">01</div>
<div class="a nw" style="left:436px;top:334.5px;font-size:16px;line-height:19px">01 - 02 - A</div>
<div class="a nw" style="left:633px;top:335px;font-size:15px;line-height:17px">一般缺陷</div>
<div class="a nw" style="left:766px;top:334.5px;font-size:16px;line-height:19px">415.336</div>
<div class="a nw" style="left:964px;top:334.5px;font-size:16px;line-height:19px">0.000</div>
<div class="a nw" style="left:1096px;top:334.5px;font-size:16px;line-height:19px">5.398</div>
<div class="a nw" style="left:1228px;top:334.5px;font-size:16px;line-height:19px">16.741</div>
<div class="a nw" style="left:1360px;top:334.5px;font-size:16px;line-height:19px">17.589</div>
<div class="a nw" style="left:1492px;top:334.5px;font-size:16px;line-height:19px">20.000</div>
<div class="a nw" style="left:303px;top:358.5px;font-size:16px;line-height:19px">02</div>
<div class="a nw" style="left:436px;top:358.5px;font-size:16px;line-height:19px">01 - 02 - A</div>
<div class="a nw" style="left:633px;top:359px;font-size:15px;line-height:17px">一般缺陷</div>
<div class="a nw" style="left:766px;top:358.5px;font-size:16px;line-height:19px">58.953</div>
<div class="a nw" style="left:964px;top:358.5px;font-size:16px;line-height:19px">0.000</div>
<div class="a nw" style="left:1096px;top:358.5px;font-size:16px;line-height:19px">3.517</div>
<div class="a nw" style="left:1228px;top:358.5px;font-size:16px;line-height:19px">14.845</div>
<div class="a nw" style="left:1360px;top:358.5px;font-size:16px;line-height:19px">15.256</div>
<div class="a nw" style="left:1492px;top:358.5px;font-size:16px;line-height:19px">20.000</div>
<div class="a nw" style="left:303px;top:382.5px;font-size:16px;line-height:19px">03</div>
<div class="a nw" style="left:436px;top:382.5px;font-size:16px;line-height:19px">01 - 02 - A</div>
<div class="a nw" style="left:633px;top:383px;font-size:15px;line-height:17px">一般缺陷</div>
<div class="a nw" style="left:766px;top:382.5px;font-size:16px;line-height:19px">223.969</div>
<div class="a nw" style="left:964px;top:382.5px;font-size:16px;line-height:19px">0.000</div>
<div class="a nw" style="left:1096px;top:382.5px;font-size:16px;line-height:19px">4.115</div>
<div class="a nw" style="left:1228px;top:382.5px;font-size:16px;line-height:19px">16.179</div>
<div class="a nw" style="left:1360px;top:382.5px;font-size:16px;line-height:19px">16.694</div>
<div class="a nw" style="left:1492px;top:382.5px;font-size:16px;line-height:19px">20.000</div>
<div class="a nw" style="left:303px;top:406.5px;font-size:16px;line-height:19px">04</div>
<div class="a nw" style="left:436px;top:406.5px;font-size:16px;line-height:19px">01 - 02 - A</div>
<div class="a nw" style="left:633px;top:407px;font-size:15px;line-height:17px">一般缺陷</div>
<div class="a nw" style="left:766px;top:406.5px;font-size:16px;line-height:19px">1.633</div>
<div class="a nw" style="left:964px;top:406.5px;font-size:16px;line-height:19px">0.000</div>
<div class="a nw" style="left:1096px;top:406.5px;font-size:16px;line-height:19px">4.588</div>
<div class="a nw" style="left:1228px;top:406.5px;font-size:16px;line-height:19px">18.987</div>
<div class="a nw" style="left:1360px;top:406.5px;font-size:16px;line-height:19px">19.534</div>
<div class="a nw" style="left:1492px;top:406.5px;font-size:16px;line-height:19px">20.000</div>
<div class="a nw" style="left:303px;top:430.5px;font-size:16px;line-height:19px">05</div>
<div class="a nw" style="left:436px;top:430.5px;font-size:16px;line-height:19px">01 - 02 - A</div>
<div class="a nw" style="left:633px;top:431px;font-size:15px;line-height:17px">一般缺陷</div>
<div class="a nw" style="left:766px;top:430.5px;font-size:16px;line-height:19px">88.188</div>
<div class="a nw" style="left:964px;top:430.5px;font-size:16px;line-height:19px">0.000</div>
<div class="a nw" style="left:1096px;top:430.5px;font-size:16px;line-height:19px">2.850</div>
<div class="a nw" style="left:1228px;top:430.5px;font-size:16px;line-height:19px">13.146</div>
<div class="a nw" style="left:1360px;top:430.5px;font-size:16px;line-height:19px">13.452</div>
<div class="a nw" style="left:1492px;top:430.5px;font-size:16px;line-height:19px">20.000</div>
<div class="a nw" style="left:303px;top:454.5px;font-size:16px;line-height:19px">06</div>
<div class="a nw" style="left:436px;top:454.5px;font-size:16px;line-height:19px">01 - 02 - C</div>
<div class="a nw" style="left:633px;top:455px;font-size:15px;line-height:17px">一般缺陷</div>
<div class="a nw" style="left:766px;top:454.5px;font-size:16px;line-height:19px">52.680</div>
<div class="a nw" style="left:964px;top:454.5px;font-size:16px;line-height:19px">0.000</div>
<div class="a nw" style="left:1096px;top:454.5px;font-size:16px;line-height:19px">4.832</div>
<div class="a nw" style="left:1228px;top:454.5px;font-size:16px;line-height:19px">18.334</div>
<div class="a nw" style="left:1360px;top:454.5px;font-size:16px;line-height:19px">18.960</div>
<div class="a nw" style="left:1492px;top:454.5px;font-size:16px;line-height:19px">20.000</div>
<div class="a nw" style="left:303px;top:478.5px;font-size:16px;line-height:19px">07</div>
<div class="a nw" style="left:436px;top:478.5px;font-size:16px;line-height:19px">01 - 02 - C</div>
<div class="a nw" style="left:633px;top:479px;font-size:15px;line-height:17px">一般缺陷</div>
<div class="a nw" style="left:766px;top:478.5px;font-size:16px;line-height:19px">2.031</div>
<div class="a nw" style="left:964px;top:478.5px;font-size:16px;line-height:19px">0.000</div>
<div class="a nw" style="left:1096px;top:478.5px;font-size:16px;line-height:19px">2.098</div>
<div class="a nw" style="left:1228px;top:478.5px;font-size:16px;line-height:19px">19.465</div>
<div class="a nw" style="left:1360px;top:478.5px;font-size:16px;line-height:19px">19.578</div>
<div class="a nw" style="left:1492px;top:478.5px;font-size:16px;line-height:19px">20.000</div>
<div class="a nw" style="left:303px;top:502.5px;font-size:16px;line-height:19px">08</div>
<div class="a nw" style="left:436px;top:502.5px;font-size:16px;line-height:19px">01 - 02 - C</div>
<div class="a nw" style="left:633px;top:503px;font-size:15px;line-height:17px">一般缺陷</div>
<div class="a nw" style="left:766px;top:502.5px;font-size:16px;line-height:19px">43.688</div>
<div class="a nw" style="left:964px;top:502.5px;font-size:16px;line-height:19px">0.000</div>
<div class="a nw" style="left:1096px;top:502.5px;font-size:16px;line-height:19px">2.855</div>
<div class="a nw" style="left:1228px;top:502.5px;font-size:16px;line-height:19px">16.412</div>
<div class="a nw" style="left:1360px;top:502.5px;font-size:16px;line-height:19px">16.659</div>
<div class="a nw" style="left:1492px;top:502.5px;font-size:16px;line-height:19px">20.000</div>
<div class="a nw" style="left:303px;top:526.5px;font-size:16px;line-height:19px">09</div>
<div class="a nw" style="left:436px;top:526.5px;font-size:16px;line-height:19px">01 - 02 - C</div>
<div class="a nw" style="left:633px;top:527px;font-size:15px;line-height:17px">一般缺陷</div>
<div class="a nw" style="left:766px;top:526.5px;font-size:16px;line-height:19px">5.484</div>
<div class="a nw" style="left:964px;top:526.5px;font-size:16px;line-height:19px">0.000</div>
<div class="a nw" style="left:1096px;top:526.5px;font-size:16px;line-height:19px">5.364</div>
<div class="a nw" style="left:1228px;top:526.5px;font-size:16px;line-height:19px">14.745</div>
<div class="a nw" style="left:1360px;top:526.5px;font-size:16px;line-height:19px">15.690</div>
<div class="a nw" style="left:1492px;top:526.5px;font-size:16px;line-height:19px">20.000</div>
<div class="btn nw" style="left:293px;top:754px;width:66px;height:33px">删除</div>
<div class="btn nw" style="left:372px;top:754px;width:75px;height:33px">合并</div>
<div class="btn nw" style="left:458px;top:754px;width:72px;height:33px">浏览</div>
<div class="btn nw" style="left:543px;top:754px;width:66px;height:33px">清空</div>
<div class="a nw" style="left:1368px;top:753px;width:160px;height:28px;background:#fff;border:1px solid #7a7a7a;font-size:15px;line-height:26px;padding-left:3px">导出当前Word文件</div>
<svg class="a" style="left:1511px;top:763px" width="11" height="7" viewBox="0 0 11 7"><path d="M1 1L5.5 5.5L10 1" fill="none" stroke="#333" stroke-width="1.2"/></svg>
<div class="btn nw" style="left:1542px;top:754px;width:79px;height:28px;line-height:26px">执行</div>
<!-- status bar -->
<div class="a" style="left:0;top:1005px;width:1920px;height:1px;background:#4f7fbf"></div>
<div class="a" style="left:0;top:1006px;width:1920px;height:23px;background:linear-gradient(#d6e6fc,#c5dbf9 30%,#b4d0f5 50%,#c2d9f8)"></div>
<div class="a nw" style="left:4px;top:1010px;font-size:14px;line-height:16px;color:#1e4a8a">就绪</div>
<div class="a nw" style="left:1256px;top:1007px;width:266px;height:22px;background:#fff;border-left:1px solid #8a8a8a;border-top:1px solid #8a8a8a;font-size:14px;line-height:21px;padding-left:3px">L: 113.40866948, 23.18119293, 231.903</div>
<div class="a nw" style="left:1526px;top:1007px;width:266px;height:22px;background:#fff;border-left:1px solid #8a8a8a;border-top:1px solid #8a8a8a;font-size:14px;line-height:21px;padding-left:2px">G: 746563.888, 2565618.927, 231.903</div>
<div class="a nw" style="left:1797px;top:1008px;font-size:14px;line-height:21px;color:#8c8c8c">ZoomRate: 2.2293</div>

</body></html>
